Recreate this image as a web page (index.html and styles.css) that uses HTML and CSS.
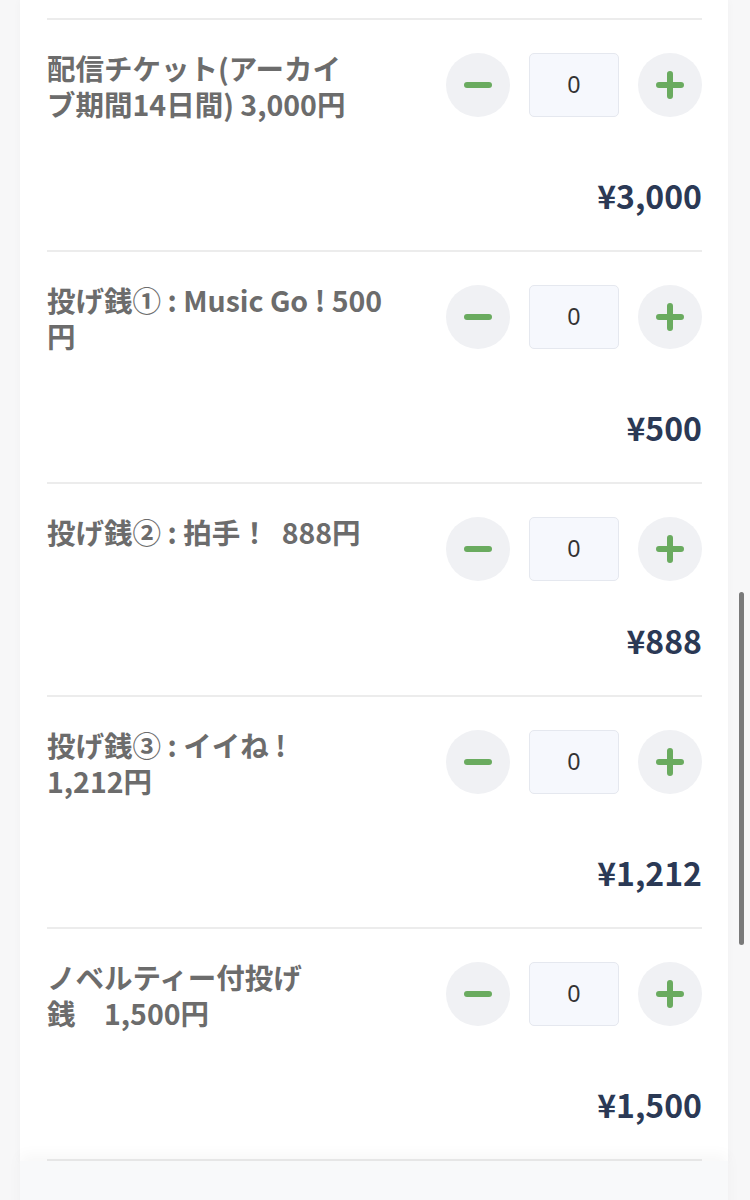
FILE: index.html
```html
<!DOCTYPE html>
<html lang="ja">
<head>
    <meta charset="UTF-8">
    <meta name="viewport" content="width=device-width, initial-scale=1.0">
    <title>チケット選択</title>
    <link rel="stylesheet" href="styles.css">
</head>
<body>
    <div class="card">
        <div class="item">
            <div class="item-head">
                <div class="item-name">配信チケット(アーカイ<br>ブ期間14日間) 3,000円</div>
                <div class="qty">
                    <button class="qty-btn"><svg width="28" height="28" viewBox="0 0 28 28"><path d="M3 14h22" stroke="#6aab5f" stroke-width="6" stroke-linecap="round"/></svg></button>
                    <input class="qty-count" type="text" value="0">
                    <button class="qty-btn"><svg width="28" height="28" viewBox="0 0 28 28"><path d="M3 14h22M14 3v22" stroke="#6aab5f" stroke-width="6" stroke-linecap="round"/></svg></button>
                </div>
            </div>
            <div class="price">¥3,000</div>
        </div>

        <div class="item">
            <div class="item-head">
                <div class="item-name">投げ銭① : Music Go ! 500円</div>
                <div class="qty">
                    <button class="qty-btn"><svg width="28" height="28" viewBox="0 0 28 28"><path d="M3 14h22" stroke="#6aab5f" stroke-width="6" stroke-linecap="round"/></svg></button>
                    <input class="qty-count" type="text" value="0">
                    <button class="qty-btn"><svg width="28" height="28" viewBox="0 0 28 28"><path d="M3 14h22M14 3v22" stroke="#6aab5f" stroke-width="6" stroke-linecap="round"/></svg></button>
                </div>
            </div>
            <div class="price">¥500</div>
        </div>

        <div class="item">
            <div class="item-head">
                <div class="item-name">投げ銭② : 拍手！&nbsp;&nbsp;888円</div>
                <div class="qty">
                    <button class="qty-btn"><svg width="28" height="28" viewBox="0 0 28 28"><path d="M3 14h22" stroke="#6aab5f" stroke-width="6" stroke-linecap="round"/></svg></button>
                    <input class="qty-count" type="text" value="0">
                    <button class="qty-btn"><svg width="28" height="28" viewBox="0 0 28 28"><path d="M3 14h22M14 3v22" stroke="#6aab5f" stroke-width="6" stroke-linecap="round"/></svg></button>
                </div>
            </div>
            <div class="price">¥888</div>
        </div>

        <div class="item">
            <div class="item-head">
                <div class="item-name">投げ銭③ : イイね !<br>1,212円</div>
                <div class="qty">
                    <button class="qty-btn"><svg width="28" height="28" viewBox="0 0 28 28"><path d="M3 14h22" stroke="#6aab5f" stroke-width="6" stroke-linecap="round"/></svg></button>
                    <input class="qty-count" type="text" value="0">
                    <button class="qty-btn"><svg width="28" height="28" viewBox="0 0 28 28"><path d="M3 14h22M14 3v22" stroke="#6aab5f" stroke-width="6" stroke-linecap="round"/></svg></button>
                </div>
            </div>
            <div class="price">¥1,212</div>
        </div>

        <div class="item">
            <div class="item-head">
                <div class="item-name">ノベルティー付投げ<br>銭　1,500円</div>
                <div class="qty">
                    <button class="qty-btn"><svg width="28" height="28" viewBox="0 0 28 28"><path d="M3 14h22" stroke="#6aab5f" stroke-width="6" stroke-linecap="round"/></svg></button>
                    <input class="qty-count" type="text" value="0">
                    <button class="qty-btn"><svg width="28" height="28" viewBox="0 0 28 28"><path d="M3 14h22M14 3v22" stroke="#6aab5f" stroke-width="6" stroke-linecap="round"/></svg></button>
                </div>
            </div>
            <div class="price">¥1,500</div>
        </div>

        <div class="divider"></div>
    </div>

    <div class="footer"></div>

    <!-- スクロールバー -->
    <div class="scrollbar"></div>
</body>
</html>
```

FILE: styles.css
```css
body {
    margin: 0;
    background-color: #f7f7f8;
    font-family: "Noto Sans CJK JP", "Noto Sans", sans-serif;
    height: 1200px;
    overflow: hidden;
}

/* カード */
.card {
    margin: 0 22px 0 20px;
    padding: 18px 26px 0 27px;
    background-color: #ffffff;
    box-shadow: 0 0 8px rgba(0, 0, 0, 0.03);
}

.item {
    border-top: 2px solid #ececec;
    padding: 33px 0 35px;
}

.item-head {
    display: flex;
    justify-content: space-between;
    align-items: flex-start;
}

.item-name {
    width: 345px;
    margin-top: -3px;
    padding-bottom: 14px;
    font-size: 28.5px;
    line-height: 36px;
    font-weight: bold;
    color: #6c6c6c;
}

.qty {
    display: flex;
    align-items: center;
    gap: 19px;
}

.qty-btn {
    width: 64px;
    height: 64px;
    border: none;
    border-radius: 50%;
    background-color: #f0f1f4;
    padding: 0;
    display: flex;
    align-items: center;
    justify-content: center;
    cursor: pointer;
}

.qty-count {
    box-sizing: border-box;
    width: 90px;
    height: 64px;
    border: 1px solid #e5e8ef;
    border-radius: 5px;
    background-color: #f6f8fd;
    font-family: "Liberation Sans", Arial, sans-serif;
    font-size: 23px;
    color: #333333;
    text-align: center;
    padding: 0;
}

.price {
    margin-top: 39px;
    text-align: right;
    font-size: 32px;
    line-height: 40px;
    font-weight: bold;
    color: #2b3955;
}

.divider {
    border-top: 2px solid #ececec;
}

/* フッター */
.footer {
    margin: 0 22px 0 20px;
    height: 60px;
    background-color: #f8f9fa;
    box-shadow: 0 -6px 14px rgba(0, 0, 0, 0.035);
}

.scrollbar {
    position: fixed;
    top: 592px;
    right: 6px;
    width: 5px;
    height: 353px;
    border-radius: 3px;
    background-color: #7a7a7a;
}
```
